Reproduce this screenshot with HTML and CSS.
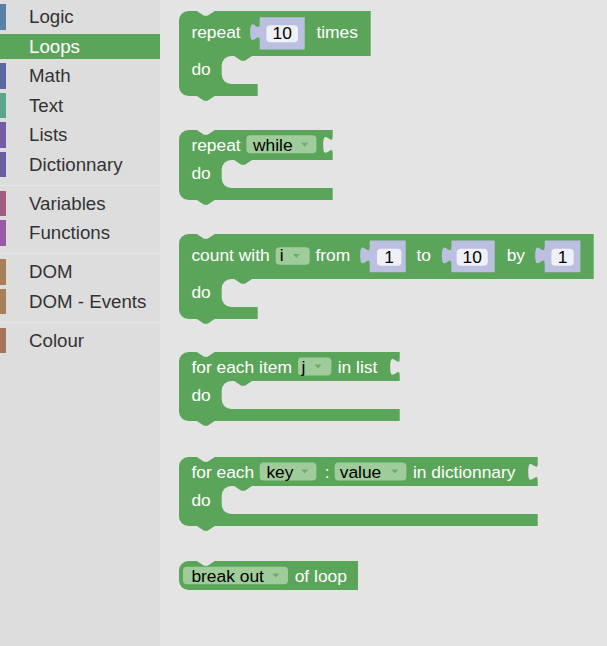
FILE: index.html
```html
<!DOCTYPE html>
<html>
<head>
<meta charset="utf-8">
<link rel="stylesheet" href="styles.css">
</head>
<body>
<div class="app">
  <div class="toolbox">
    <div class="cat logic">Logic</div>
    <div class="cat loops selected">Loops</div>
    <div class="cat math">Math</div>
    <div class="cat text">Text</div>
    <div class="cat lists">Lists</div>
    <div class="cat dict">Dictionnary</div>
    <div class="sep"></div>
    <div class="cat vars">Variables</div>
    <div class="cat funcs">Functions</div>
    <div class="sep"></div>
    <div class="cat dom">DOM</div>
    <div class="cat dom">DOM - Events</div>
    <div class="sep"></div>
    <div class="cat colour">Colour</div>
  </div>
  <div class="flyout">
    <svg class="block b1" width="200" height="91" viewBox="0 0 200 91">
      <path class="body" d="M0,9.5 A9.5,9.5 0 0 1 9.5,0 H17.9 l7.1,4.8 3.6,0 7.1,-4.8 H191.7 V45 H73 l-7.1,4.8 -3.6,0 -7.1,-4.8 H52.2 a9.5,9.5 0 0 0 -9.5,9.5 V63.5 a9.5,9.5 0 0 0 9.5,9.5 H78.7 V85 H35.7 l-7.1,4.8 -3.6,0 -7.1,-4.8 H9.5 a9.5,9.5 0 0 1 -9.5,-9.5 Z"/>
      <text x="12.4" y="26.7">repeat</text>
      <g transform="translate(80.7,6.3)"><path class="shadow" d="M0,0 H45 V32.2 H0 V23.8 C0,11.9 -9.5,33.3 -9.5,14.9 C-9.5,-3.6 0,17.9 0,6 Z"/></g>
      <rect class="numfield" x="87.4" y="14.2" width="31.6" height="17" rx="4"/>
      <text class="num" x="103.2" y="28.3">10</text>
      <text x="137.4" y="26.7">times</text>
      <text x="12.4" y="64">do</text>
    </svg>

    <svg class="block b2" width="160" height="75.5" viewBox="0 0 160 75.5">
      <path class="body" d="M0,9.5 A9.5,9.5 0 0 1 9.5,0 H17.9 l7.1,4.8 3.6,0 7.1,-4.8 H153.7 v6 c0,11.9 -9.5,-9.5 -9.5,8.9 s9.5,-3 9.5,8.9 V30 H73 l-7.1,4.8 -3.6,0 -7.1,-4.8 H52.2 a9.5,9.5 0 0 0 -9.5,9.5 V48.5 a9.5,9.5 0 0 0 9.5,9.5 H153.7 V70 H35.7 l-7.1,4.8 -3.6,0 -7.1,-4.8 H9.5 a9.5,9.5 0 0 1 -9.5,-9.5 Z"/>
      <text x="12.4" y="20.5">repeat</text>
      <rect class="dd" x="67.4" y="5.3" width="70" height="18" rx="4"/>
      <text class="ddtext" x="74" y="20.5">while</text>
      <polygon class="arrow" points="122.2,12.8 129.2,12.8 125.7,16.8"/>
      <text x="12.4" y="49">do</text>
    </svg>

    <svg class="block b3" width="420" height="90.5" viewBox="0 0 420 90.5">
      <path class="body" d="M0,9.5 A9.5,9.5 0 0 1 9.5,0 H17.9 l7.1,4.8 3.6,0 7.1,-4.8 H414.7 V45 H73 l-7.1,4.8 -3.6,0 -7.1,-4.8 H52.2 a9.5,9.5 0 0 0 -9.5,9.5 V63.5 a9.5,9.5 0 0 0 9.5,9.5 H78.7 V85 H35.7 l-7.1,4.8 -3.6,0 -7.1,-4.8 H9.5 a9.5,9.5 0 0 1 -9.5,-9.5 Z"/>
      <text x="12.4" y="27.2">count with</text>
      <rect class="dd" x="96.7" y="13.2" width="34" height="17.6" rx="4"/>
      <text class="ddtext" x="100.7" y="27.2">i</text>
      <polygon class="arrow" points="113.9,20 120.9,20 117.4,24"/>
      <text x="136.4" y="27.2">from</text>
      <g transform="translate(190.7,6.5)"><path class="shadow" d="M0,0 H36 V31.7 H0 V23.8 C0,11.9 -9.5,33.3 -9.5,14.9 C-9.5,-3.6 0,17.9 0,6 Z"/></g>
      <rect class="numfield" x="198" y="14.8" width="24.4" height="17" rx="4"/>
      <text class="num" x="210.2" y="28.8">1</text>
      <text x="237.4" y="27.2">to</text>
      <g transform="translate(272.4,6.5)"><path class="shadow" d="M0,0 H43.3 V31.7 H0 V23.8 C0,11.9 -9.5,33.3 -9.5,14.9 C-9.5,-3.6 0,17.9 0,6 Z"/></g>
      <rect class="numfield" x="277.7" y="14.8" width="31" height="17" rx="4"/>
      <text class="num" x="293.2" y="28.8">10</text>
      <text x="327.7" y="27.2">by</text>
      <g transform="translate(365.7,6.5)"><path class="shadow" d="M0,0 H35.7 V31.7 H0 V23.8 C0,11.9 -9.5,33.3 -9.5,14.9 C-9.5,-3.6 0,17.9 0,6 Z"/></g>
      <rect class="numfield" x="372.4" y="14.8" width="22.3" height="17" rx="4"/>
      <text class="num" x="383.5" y="28.8">1</text>
      <text x="12.4" y="64.2">do</text>
    </svg>

    <svg class="block b4" width="225" height="77" viewBox="0 0 225 77">
      <path class="body" d="M0,9.5 A9.5,9.5 0 0 1 9.5,0 H17.9 l7.1,4.8 3.6,0 7.1,-4.8 H220.7 v6 c0,11.9 -9.5,-9.5 -9.5,8.9 s9.5,-3 9.5,8.9 V29 H73 l-7.1,4.8 -3.6,0 -7.1,-4.8 H52.2 a9.5,9.5 0 0 0 -9.5,9.5 V47.5 a9.5,9.5 0 0 0 9.5,9.5 H220.7 V69 H35.7 l-7.1,4.8 -3.6,0 -7.1,-4.8 H9.5 a9.5,9.5 0 0 1 -9.5,-9.5 Z"/>
      <text x="12.4" y="20.5">for each item</text>
      <rect class="dd" x="119" y="5.5" width="33.4" height="18" rx="4"/>
      <text class="ddtext" x="122.4" y="20.5">j</text>
      <polygon class="arrow" points="135.5,12.5 142.5,12.5 139,16.5"/>
      <text x="158.7" y="20.5">in list</text>
      <text x="12.4" y="48.5">do</text>
    </svg>

    <svg class="block b5" width="365" height="76" viewBox="0 0 365 76">
      <path class="body" d="M0,9.5 A9.5,9.5 0 0 1 9.5,0 H17.9 l7.1,4.8 3.6,0 7.1,-4.8 H358.7 v6 c0,11.9 -9.5,-9.5 -9.5,8.9 s9.5,-3 9.5,8.9 V29 H73 l-7.1,4.8 -3.6,0 -7.1,-4.8 H52.2 a9.5,9.5 0 0 0 -9.5,9.5 V47.5 a9.5,9.5 0 0 0 9.5,9.5 H358.7 V69 H35.7 l-7.1,4.8 -3.6,0 -7.1,-4.8 H9.5 a9.5,9.5 0 0 1 -9.5,-9.5 Z"/>
      <text x="12.4" y="20.5">for each</text>
      <rect class="dd" x="80.7" y="5.5" width="56.7" height="18" rx="4"/>
      <text class="ddtext" x="87.4" y="20.5">key</text>
      <polygon class="arrow" points="122.2,12.5 129.2,12.5 125.7,16.5"/>
      <text x="145.7" y="20.5">:</text>
      <rect class="dd" x="155.7" y="5.5" width="71.7" height="18" rx="4"/>
      <text class="ddtext" x="160.7" y="20.5">value</text>
      <polygon class="arrow" points="212.2,12.5 219.2,12.5 215.7,16.5"/>
      <text x="234" y="20.5">in dictionnary</text>
      <text x="12.4" y="48.5">do</text>
    </svg>

    <svg class="block b6" width="185" height="30" viewBox="0 0 185 30">
      <path class="body" d="M0,9.5 A9.5,9.5 0 0 1 9.5,0 H17.9 l7.1,4.8 3.6,0 7.1,-4.8 H179 V29 H9.5 a9.5,9.5 0 0 1 -9.5,-9.5 Z"/>
      <rect class="dd" x="4" y="5.7" width="105" height="17.6" rx="4"/>
      <text class="ddtext" x="12.4" y="20.7">break out</text>
      <polygon class="arrow" points="93.2,12.5 100.2,12.5 96.7,16.5"/>
      <text x="115.7" y="20.7">of loop</text>
    </svg>
  </div>
</div>
</body>
</html>
```

FILE: styles.css
```css
html, body {
  margin: 0;
  padding: 0;
}
body {
  font-family: "Liberation Sans", Arial, sans-serif;
  background: #e4e4e4;
}
.app {
  display: flex;
  width: 607px;
  height: 646px;
  overflow: hidden;
}
.toolbox {
  flex: none;
  width: 160px;
  background: #dddddd;
  padding-top: 4.3px;
  display: flex;
  flex-direction: column;
  box-sizing: border-box;
}
.cat {
  height: 25.5px;
  line-height: 25.5px;
  margin-bottom: 4px;
  padding-left: 23px;
  border-left: 6px solid transparent;
  font-size: 18.7px;
  color: #333;
  white-space: nowrap;
}
.cat.logic { border-left-color: #5b80a5; }
.cat.loops { border-left-color: #5ba55b; }
.cat.math { border-left-color: #5b67a5; }
.cat.text { border-left-color: #5ba58c; }
.cat.lists { border-left-color: #745ba5; }
.cat.dict { border-left-color: #6a5ba5; }
.cat.vars { border-left-color: #a55b80; }
.cat.funcs { border-left-color: #995ba5; }
.cat.dom { border-left-color: #a5805b; }
.cat.colour { border-left-color: #a5745b; }
.cat.selected {
  background: #5ba55b;
  color: #fff;
}
.sep {
  height: 0;
  border-bottom: 1px solid #e6e6e6;
  margin: 3.3px 0 5.2px;
}
.flyout {
  flex: 1;
  background: #e4e4e4;
  padding: 11px 0 0 19.3px;
  display: flex;
  flex-direction: column;
  align-items: flex-start;
  gap: 28px;
}
.block {
  display: block;
  overflow: visible;
}
.block text {
  font-family: "Liberation Sans", Arial, sans-serif;
  font-size: 17.4px;
  fill: #fff;
}
.block .body { fill: #5ba55b; }
.block .shadow { fill: #bcc0e0; }
.block .numfield { fill: #f0f1f8; }
.block .dd { fill: #a0cc9c; }
.block .arrow { fill: #6aad6a; }
.block text.ddtext { fill: #000; }
.block text.num { fill: #000; text-anchor: middle; }
```
